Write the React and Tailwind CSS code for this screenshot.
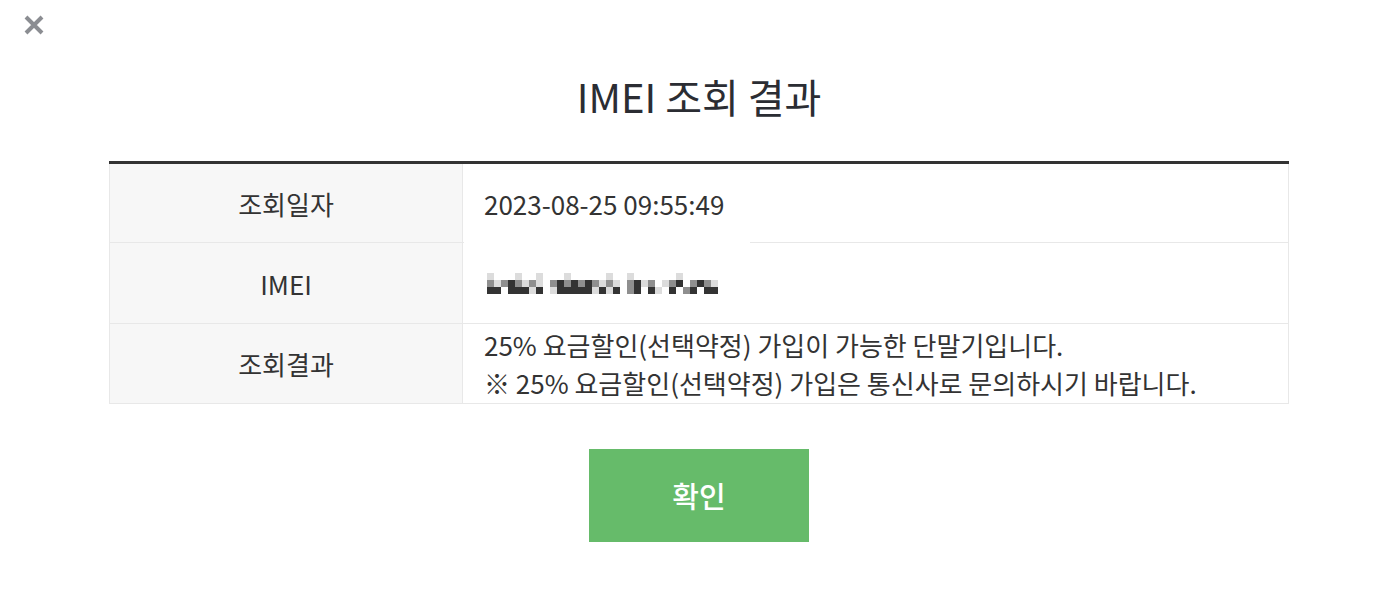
import React from "react";

const font = { fontFamily: '"Noto Sans CJK KR", "Noto Sans", sans-serif' };

// mosaic pattern for the redacted IMEI (3 rows x 33 cols), values = gray level
const rows = [
  "lwwwlwwlwwwlwwwwwlwwlwwwwwwlwwwww",
  "mlmdmlmlwmdmdmdmlmlwmdlmwlmdwmdml",
  "ddwdddldwldddddldldwmdwdlwdwmdwdd",
];
const shade = { w: "#ffffff", l: "#dcdcdc", m: "#8f8f8f", d: "#333333" };

function Mosaic() {
  return (
    <div className="flex flex-col">
      {rows.map((r, i) => (
        <div key={i} className="flex">
          {r.split("").map((c, j) => (
            <div key={j} className="w-[7px] h-[7px]" style={{ background: shade[c] }} />
          ))}
        </div>
      ))}
    </div>
  );
}

export default function App() {
  return (
    <div className="w-[1394px] h-[610px] bg-white relative text-[#333]" style={font}>
      <div className="absolute left-[22px] top-[13px]">
        <svg width="24" height="24" viewBox="0 0 24 24">
          <path d="M4 4 L20 20 M20 4 L4 20" stroke="#8b8d92" strokeWidth="4" strokeLinecap="butt" />
        </svg>
      </div>
      <div className="flex flex-col items-center pt-[68px]">
        <h1 className="ml-[4px] text-[40px] leading-[56px] text-[#2b2d33] font-normal">IMEI 조회 결과</h1>
        <div className="ml-[4px] mt-[37px] w-[1180px] border-t-[3px] border-[#333]">
          <div className="relative border-l border-r border-[#e8e8e8]">
            <div className="flex h-[79px] border-b border-[#e8e8e8]">
              <div className="w-[353px] bg-[#f7f7f7] border-r border-[#e8e8e8] flex items-center justify-center text-[26px]">조회일자</div>
              <div className="flex-1 flex items-center pl-[21px] text-[26px]">2023-08-25 09:55:49</div>
            </div>
            <div className="absolute left-[354px] top-[70px] w-[286px] h-[14px] bg-white" />
            <div className="flex h-[81px] border-b border-[#e8e8e8]">
              <div className="w-[353px] bg-[#f7f7f7] border-r border-[#e8e8e8] flex items-center justify-center text-[26px]">IMEI</div>
              <div className="flex-1 flex items-center pl-[24px]"><Mosaic /></div>
            </div>
            <div className="flex h-[80px] border-b border-[#e8e8e8]">
              <div className="w-[353px] bg-[#f7f7f7] border-r border-[#e8e8e8] flex items-center justify-center text-[26px]">조회결과</div>
              <div className="flex-1 flex flex-col justify-center pl-[21px] text-[26px] leading-[38px]">
                <div>25% 요금할인(선택약정) 가입이 가능한 단말기입니다.</div>
                <div>※ 25% 요금할인(선택약정) 가입은 통신사로 문의하시기 바랍니다.</div>
              </div>
            </div>
          </div>
        </div>
        <button className="ml-[4px] mt-[45px] w-[220px] h-[93px] bg-[#66bb6a] text-white text-[29px] font-medium flex items-center justify-center">확인</button>
      </div>
    </div>
  );
}
